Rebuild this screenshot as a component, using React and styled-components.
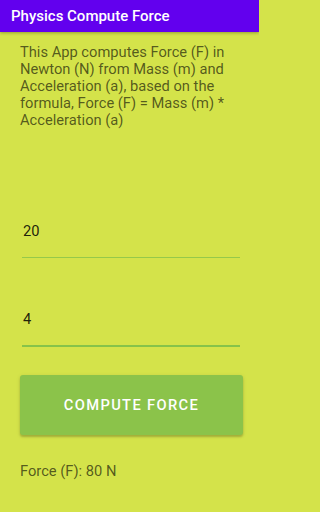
import React from "react";
import styled, { createGlobalStyle } from "styled-components";

const Global = createGlobalStyle`
  html, body { margin: 0; padding: 0; }
  body { background: #d4e34a; font-family: Roboto, "Noto Sans", sans-serif; }
`;

const Screen = styled.div`
  width: 259px;
  height: 512px;
  background: #d4e34a;
  display: flex;
  flex-direction: column;
  overflow: hidden;
`;

const AppBar = styled.header`
  height: 32px;
  background: #6200ee;
  color: #fff;
  display: flex;
  align-items: center;
  padding: 0 11px;
  font-size: 15px;
  font-weight: 500;
  box-shadow: 0 1px 3px rgba(0, 0, 0, 0.3);
  flex-shrink: 0;
`;

const Content = styled.main`
  padding: 12px 20px 0 20px;
  display: flex;
  flex-direction: column;
`;

const Intro = styled.p`
  margin: 0;
  font-size: 14.7px;
  line-height: 17px;
  color: rgba(0, 0, 0, 0.62);
`;

const Field = styled.div`
  margin: ${(p) => p.$top}px -1px 0 2px;
  height: 40px;
  display: flex;
  flex-direction: column;
  justify-content: flex-end;
  border-bottom: ${(p) => (p.$focused ? "2px solid #86c34a" : "1px solid #96c94a")};
`;

const Input = styled.input`
  border: none;
  background: transparent;
  outline: none;
  padding: 0 0 17px 1px;
  margin: 0;
  font-family: Roboto, "Noto Sans", sans-serif;
  font-size: 14.7px;
  color: rgba(0, 0, 0, 0.87);
`;

const Button = styled.button`
  margin: 28px -4px 0 0;
  height: 60px;
  border: none;
  border-radius: 3px;
  background: #8bc34a;
  color: #fff;
  font-family: Roboto, "Noto Sans", sans-serif;
  font-weight: 500;
  font-size: 14.7px;
  letter-spacing: 1.35px;
  text-transform: uppercase;
  box-shadow: 0 2px 2px rgba(0, 0, 0, 0.18), 0 1px 4px rgba(0, 0, 0, 0.1);
`;

const Result = styled.div`
  margin-top: 27px;
  font-size: 14.7px;
  color: rgba(0, 0, 0, 0.62);
`;

export default function App() {
  return (
    <>
      <Global />
      <Screen>
        <AppBar>Physics Compute Force</AppBar>
        <Content>
          <Intro>
            This App computes Force (F) in Newton (N) from Mass (m) and
            Acceleration (a), based on the formula, Force (F) = Mass (m) *
            Acceleration (a)
          </Intro>
          <Field $top={88}>
            <Input defaultValue="20" />
          </Field>
          <Field $top={47} $focused>
            <Input defaultValue="4" />
          </Field>
          <Button>Compute Force</Button>
          <Result>Force (F): 80 N</Result>
        </Content>
      </Screen>
    </>
  );
}
